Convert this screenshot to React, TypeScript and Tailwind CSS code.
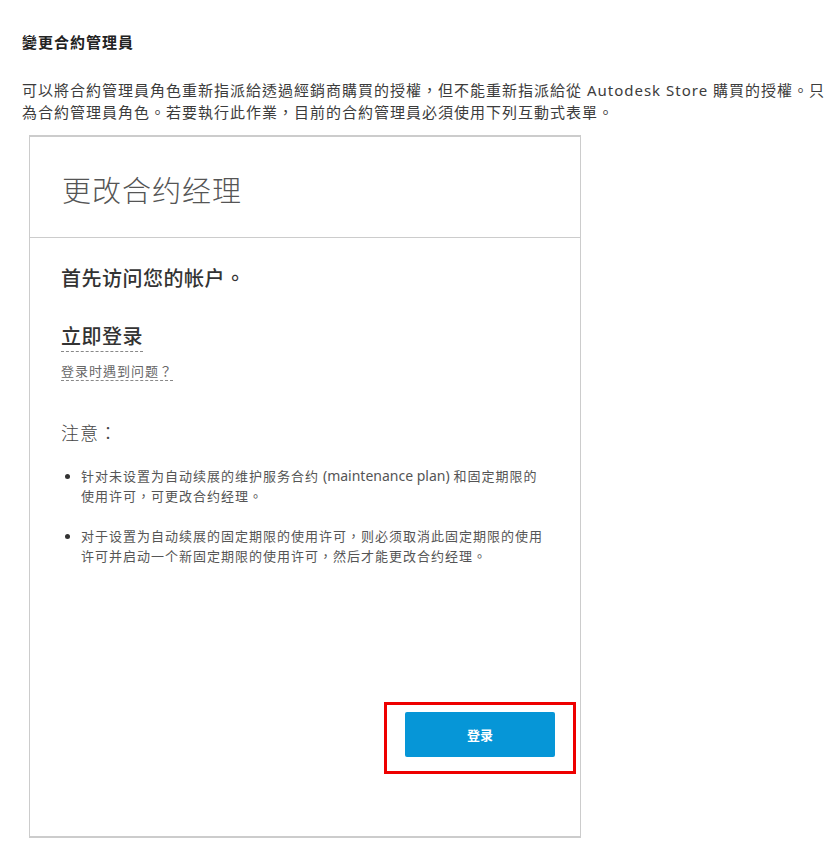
export default function App() {
  return (
    <div className="w-[824px] h-[862px] overflow-hidden bg-white text-[#3c3c3c] font-['Noto_Sans','Noto_Sans_CJK_TC',sans-serif]">
      <div className="pl-[22px] pt-[31px]">
        <h3 className="text-[15px] leading-[22px] font-bold text-[#222] tracking-[1px]">變更合約管理員</h3>
        <p className="mt-[26px] text-[15px] leading-[22px] whitespace-nowrap tracking-[1px]">
          可以將合約管理員角色重新指派給透過經銷商購買的授權，但不能重新指派給從 Autodesk Store 購買的授權。只有合約管理員可以將其他使用者指派
          <br />
          為合約管理員角色。若要執行此作業，目前的合約管理員必須使用下列互動式表單。
        </p>
      </div>

      <div className="ml-[29px] mt-[12px] w-[552px] h-[703px] border border-t-2 border-b-2 border-[#cccccc] flex flex-col font-['Noto_Sans_CJK_TC',sans-serif]">
        <div className="h-[101px] border-b border-[#cccccc] flex items-center pl-[32px] pt-[6px]">
          <h2 className="text-[29px] font-light text-[#555] tracking-[1px]">更改合约经理</h2>
        </div>

        <div className="flex-1 flex flex-col px-[31px]">
          <p className="mt-[26px] text-[20px] leading-[28px] font-medium text-[#333] tracking-[0.5px]">首先访问您的帐户。</p>

          <div className="mt-[30px]">
            <a className="inline-block text-[20px] leading-[28px] font-medium text-[#333] tracking-[0.5px] border-b border-dashed border-[#888] pb-[1px]">
              立即登录
            </a>
          </div>
          <div className="mt-[5px]">
            <a className="inline-block text-[13px] leading-[19px] text-[#666] tracking-[1px] border-b border-dashed border-[#888]">
              登录时遇到问题？
            </a>
          </div>

          <p className="mt-[38px] text-[18px] leading-[26px] font-light text-[#444] tracking-[1px]">注意：</p>

          <ul className="mt-[21px] list-disc pl-[20px] text-[13px] leading-[20px] text-[#555] tracking-[1px] marker:text-[#333] marker:text-[12px]">
            <li className="mb-[20px] whitespace-nowrap">
              针对未设置为自动续展的维护服务合约{" "}
              <span className="font-['Noto_Sans',sans-serif] text-[14px] tracking-normal">(maintenance plan)</span> 和固定期限的
              <br />
              使用许可，可更改合约经理。
            </li>
            <li className="mb-[20px] whitespace-nowrap">
              对于设置为自动续展的固定期限的使用许可，则必须取消此固定期限的使用
              <br />
              许可并启动一个新固定期限的使用许可，然后才能更改合约经理。
            </li>
          </ul>

          <div className="mt-auto mb-[62px] flex justify-end">
            <div className="border-[3px] border-[#ee0000] px-[18px] pt-[7px] pb-[14px] mr-[-27px]">
              <button className="w-[150px] h-[45px] rounded-[2px] bg-[#0696d7] text-white text-[13px] font-bold">
                登录
              </button>
            </div>
          </div>
        </div>
      </div>
    </div>
  );
}
